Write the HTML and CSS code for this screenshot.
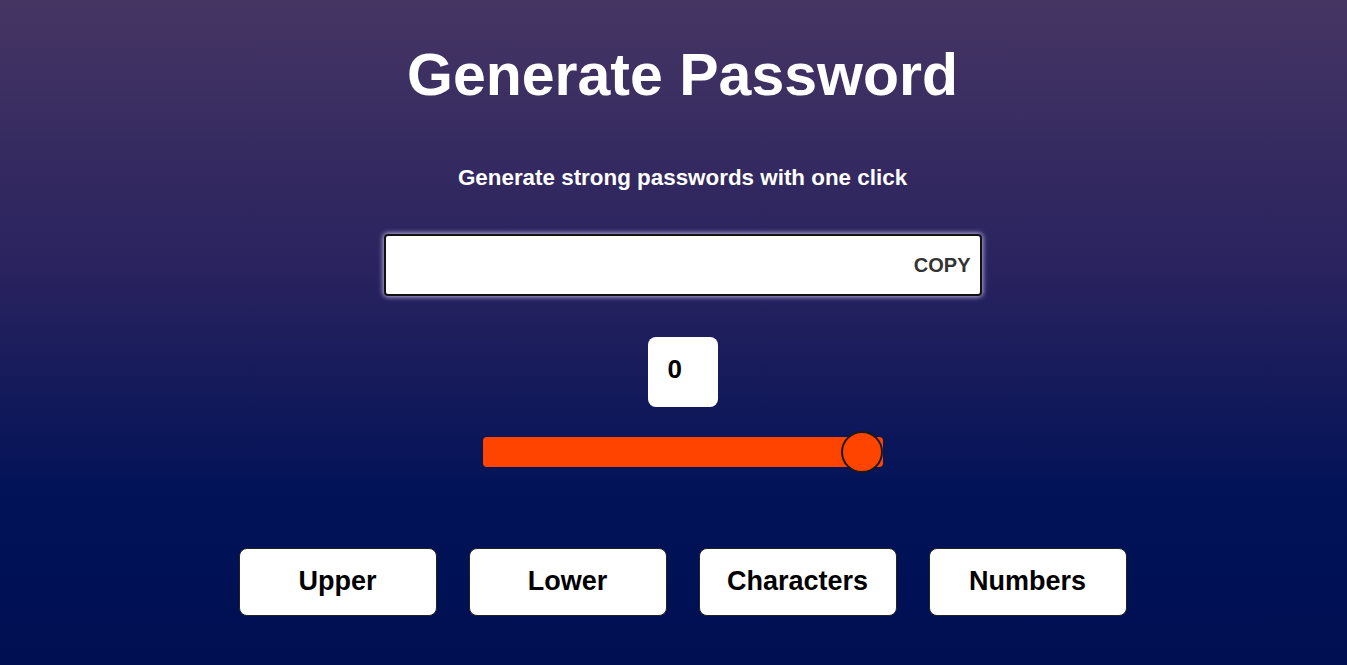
FILE: index.html
```html
<!DOCTYPE html>
<html lang="en">
<head>
<meta charset="utf-8">
<title>Generate Password</title>
<link rel="stylesheet" href="styles.css">
</head>
<body>
<main class="app">
  <h1 class="title">Generate Password</h1>
  <p class="subtitle">Generate strong passwords with one click</p>
  <div class="output">
    <input class="output-field" type="text" readonly>
    <button class="copy" type="button">COPY</button>
  </div>
  <div class="length">0</div>
  <input class="slider" type="range" min="0" max="20" value="20">
  <div class="options">
    <button class="option" type="button">Upper</button>
    <button class="option" type="button">Lower</button>
    <button class="option" type="button">Characters</button>
    <button class="option" type="button">Numbers</button>
  </div>
</main>
</body>
</html>
```

FILE: styles.css
```css
* { box-sizing: border-box; }
html, body { height: 100%; }
body {
  margin: 0;
  font-family: "Liberation Sans", Arial, sans-serif;
  background: linear-gradient(to bottom, #453563 0%, #2a235f 40%, #011257 75%, #000f52 100%);
  color: #fff;
  overflow: hidden;
}
.app {
  display: flex;
  flex-direction: column;
  align-items: center;
  padding-top: 38px;
  padding-left: 18px;
}
.title {
  margin: 0;
  font-size: 59px;
  font-weight: 700;
  line-height: 74px;
}
.subtitle {
  margin: 53px 0 0;
  font-size: 22.4px;
  font-weight: 700;
  line-height: 26px;
}
.output {
  margin-top: 43px;
  width: 598px;
  height: 62px;
  background: #fff;
  border: 2px solid #111;
  border-radius: 4px;
  box-shadow: 0 0 5px 1px rgba(220, 210, 255, 0.8);
  display: flex;
  align-items: center;
  padding-right: 9px;
}
.output-field {
  flex: 1;
  height: 100%;
  border: 0;
  outline: none;
  background: transparent;
  font: inherit;
}
.copy {
  border: 0;
  background: transparent;
  padding: 0;
  font-family: "Liberation Sans", Arial, sans-serif;
  font-weight: 700;
  font-size: 20px;
  color: #333;
  cursor: pointer;
}
.length {
  margin-top: 41px;
  width: 70px;
  height: 70px;
  background: #fff;
  border-radius: 8px;
  color: #000;
  font-size: 26px;
  font-weight: 700;
  padding: 17px 0 0 20px;
  line-height: 30px;
}
.slider {
  -webkit-appearance: none;
  appearance: none;
  margin: 30px 0 0;
  width: 400px;
  height: 30px;
  background: #ff4400;
  border-radius: 4px;
  outline: none;
}
.slider::-webkit-slider-thumb {
  -webkit-appearance: none;
  appearance: none;
  width: 42px;
  height: 42px;
  border-radius: 50%;
  background: #ff4400;
  border: 2px solid #1a1a1a;
  cursor: pointer;
}
.options {
  margin-top: 81px;
  display: flex;
  gap: 32px;
}
.option {
  width: 198px;
  height: 68px;
  background: #fff;
  border: 1px solid #222;
  border-radius: 8px;
  font-family: "Liberation Sans", Arial, sans-serif;
  font-weight: 700;
  font-size: 27px;
  color: #000;
  padding: 0 0 2px;
  cursor: pointer;
}
```
